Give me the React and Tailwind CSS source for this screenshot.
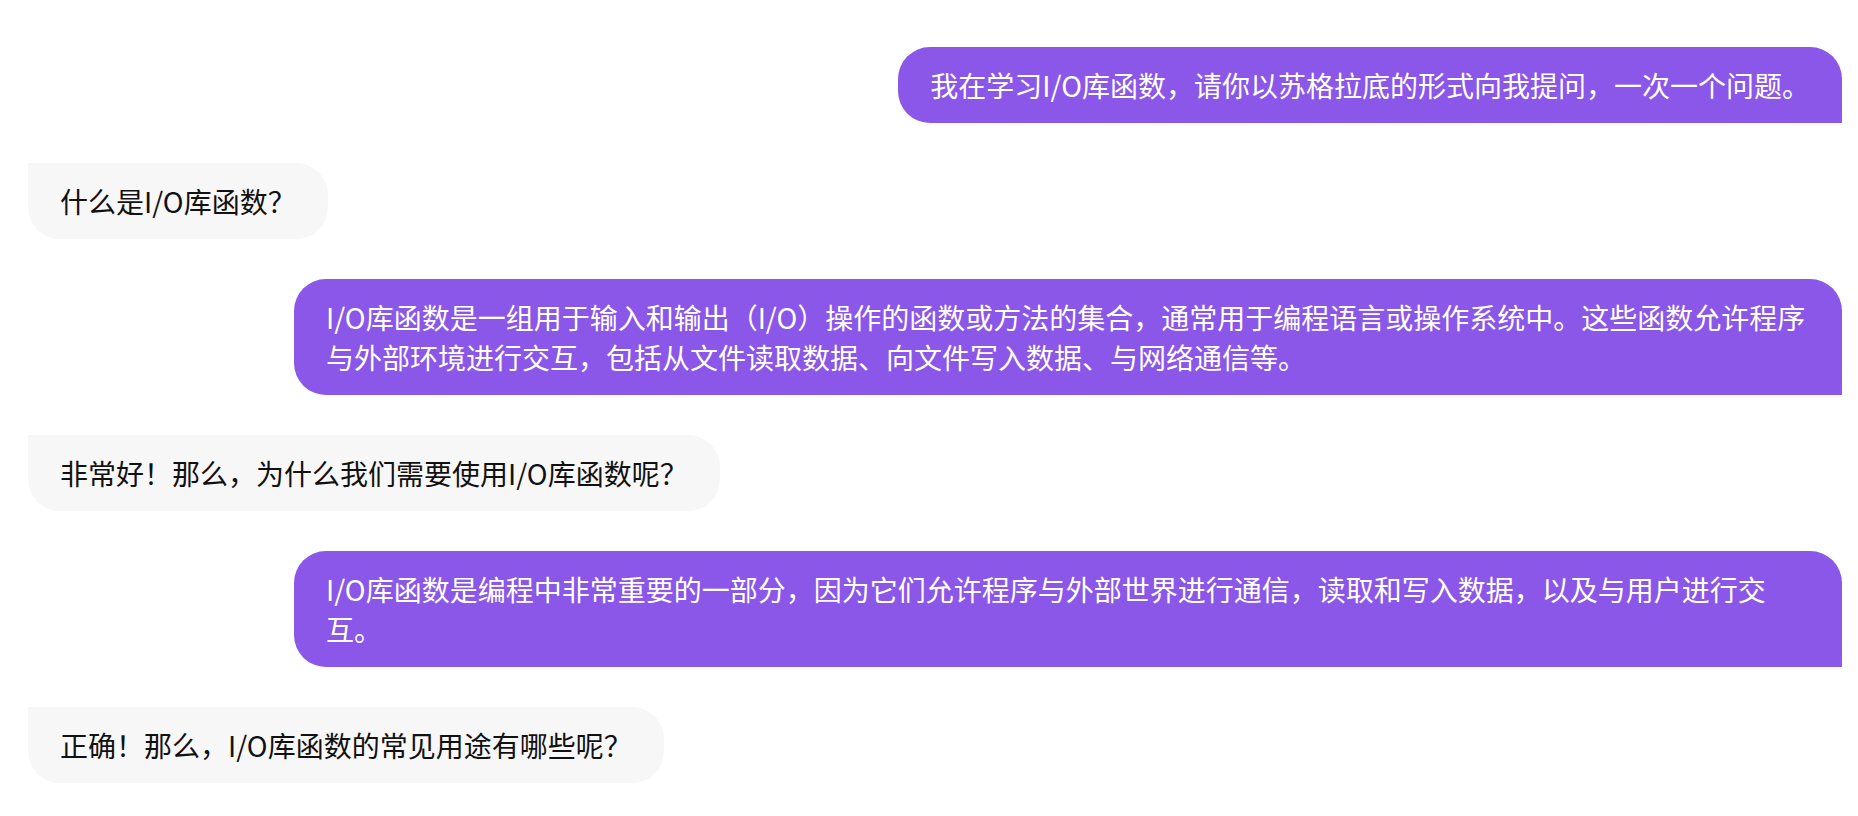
const messages = [
  { from: "me", text: "我在学习I/O库函数，请你以苏格拉底的形式向我提问，一次一个问题。" },
  { from: "bot", text: "什么是I/O库函数？" },
  {
    from: "me",
    text: "I/O库函数是一组用于输入和输出（I/O）操作的函数或方法的集合，通常用于编程语言或操作系统中。这些函数允许程序与外部环境进行交互，包括从文件读取数据、向文件写入数据、与网络通信等。",
  },
  { from: "bot", text: "非常好！那么，为什么我们需要使用I/O库函数呢？" },
  {
    from: "me",
    text: "I/O库函数是编程中非常重要的一部分，因为它们允许程序与外部世界进行通信，读取和写入数据，以及与用户进行交互。",
  },
  { from: "bot", text: "正确！那么，I/O库函数的常见用途有哪些呢？" },
];

const Bubble = ({ from, text }) => {
  if (from === "me") {
    return (
      <div className="flex justify-end">
        <div className="max-w-[1548px] bg-[#8b57e8] text-white rounded-[32px] rounded-br-none px-8 py-[18px] leading-[40px]">
          {text}
        </div>
      </div>
    );
  }
  return (
    <div className="flex justify-start">
      <div className="max-w-[1548px] bg-[#f7f7f7] text-[#111111] rounded-[32px] rounded-tl-none px-8 py-[18px] leading-[40px]">
        {text}
      </div>
    </div>
  );
};

export default function App() {
  return (
    <div
      className="min-h-screen bg-white pt-[47px] pl-[28px] pr-[16px] pb-8 text-[28px]"
      style={{ fontFamily: '"Noto Sans CJK SC", "Noto Sans", sans-serif' }}
    >
      <div className="flex flex-col gap-10">
        {messages.map((m, i) => (
          <Bubble key={i} from={m.from} text={m.text} />
        ))}
      </div>
    </div>
  );
}
